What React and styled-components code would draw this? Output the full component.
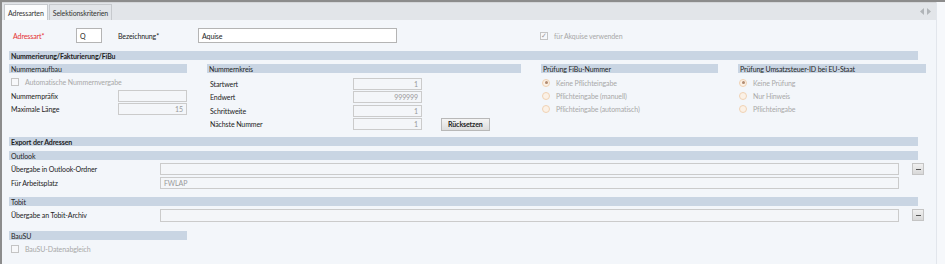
import React from "react"
import styled, { createGlobalStyle } from "styled-components"

const Global = createGlobalStyle`
  html, body {
    margin: 0;
    padding: 0;
    background: #f6f8fb;
  }
  * {
    box-sizing: border-box;
  }
`

const Frame = styled.div`
  width: 945px;
  height: 264px;
  display: flex;
  border-top: 2px solid #8c8c8c;
  border-left: 2px solid #8c8c8c;
  font-family: Lato, "Liberation Sans", sans-serif;
  font-size: 7px;
  letter-spacing: -0.1px;
  color: #222;
  overflow: hidden;
`

const Main = styled.div`
  width: 935px;
  display: flex;
  flex-direction: column;
  background: #f3f6fa;
  border-right: 1px solid #e2e6ec;
`

const TabBar = styled.div`
  height: 18px;
  display: flex;
  align-items: flex-end;
  padding-left: 2px;
  background: #e2e5e9;
  border-top: 1px solid #d4d6d9;
`

const Tab = styled.div`
  height: 16px;
  padding: 0 3px;
  display: flex;
  align-items: center;
  background: ${p => (p.$active ? "#fbfcfd" : "#e2e5e9")};
  border: 1px solid #c6c9cd;
  border-bottom: none;
  margin-right: 1px;
  color: #333;
`

const TabArrows = styled.div`
  margin-left: auto;
  align-self: center;
  display: flex;
  gap: 3px;
  padding-right: 5px;
`

const Content = styled.div`
  flex: 1;
  padding: 8px 9px 0 7px;
`

const Row = styled.div`
  display: flex;
  align-items: center;
  height: ${p => p.$h || 13}px;
  margin-top: ${p => p.$mt || 0}px;
`

const Label = styled.span`
  width: ${p => p.$w}px;
  padding-left: ${p => p.$pad || 2}px;
  color: ${p => (p.$red ? "#e53030" : p.$muted ? "#a8a8a8" : "#222")};
  white-space: nowrap;
`

const Input = styled.div`
  width: ${p => p.$w}px;
  height: ${p => p.$h || 12}px;
  border: 1px solid ${p => (p.$white ? "#b4b4b4" : "#cbcbcb")};
  background: ${p => (p.$white ? "#fff" : "#f4f6f9")};
  display: flex;
  align-items: center;
  justify-content: ${p => (p.$right ? "flex-end" : "flex-start")};
  padding: 0 3px;
  color: ${p => (p.$white ? "#222" : "#999")};
`

const Bar = styled.div`
  height: 9px;
  width: ${p => (p.$w ? `${p.$w}px` : "auto")};
  background: #c9d5e3;
  display: flex;
  align-items: center;
  padding-left: 2px;
  font-weight: ${p => (p.$bold ? 700 : 400)};
  color: #1e1e1e;
  margin-top: ${p => p.$mt || 0}px;
  margin-right: ${p => p.$mr || 0}px;
`

const Columns = styled.div`
  display: grid;
  grid-template-columns: 178px 314px 177px 188px;
  column-gap: 20px;
  margin-top: 4px;
  margin-right: 9px;
`

const Column = styled.div`
  display: flex;
  flex-direction: column;
`

const Spacer = styled.div`
  height: ${p => p.$h}px;
`

const Box = styled.span`
  width: 8px;
  height: 8px;
  border: 1px solid #c4c4c4;
  background: #f7f8fa;
  margin: 0 4px 0 2px;
  display: inline-flex;
  align-items: center;
  justify-content: center;
  color: #9a9a9a;
  font-size: 7px;
  line-height: 1;
`

const Radio = styled.span`
  width: 8px;
  height: 8px;
  border-radius: 50%;
  border: 1px solid #f0d2b4;
  background: #fbf1e6;
  margin: 0 4px 0 1px;
  display: inline-flex;
  align-items: center;
  justify-content: center;
  &::after {
    content: "";
    width: 3px;
    height: 3px;
    border-radius: 50%;
    background: ${p => (p.$on ? "#b08a70" : "transparent")};
  }
`

const Button = styled.div`
  height: 13px;
  padding: 0 6px;
  border: 1px solid #b8b8b8;
  background: linear-gradient(#f4f4f4, #dcdcdc);
  display: flex;
  align-items: center;
  font-weight: 700;
  color: #222;
  margin-left: ${p => p.$ml || 0}px;
`

const DotsButton = styled.div`
  width: 12px;
  height: 12px;
  border: 1px solid #c4c4c4;
  background: linear-gradient(#f0f0f0, #d8d8d8);
  margin-left: 13px;
  display: flex;
  align-items: center;
  justify-content: center;
  &::after {
    content: "";
    width: 5px;
    height: 1px;
    background: #555;
    margin-top: 1px;
  }
`

const Arrow = ({ dir }) => (
  <svg width="4" height="7" viewBox="0 0 4 7">
    <path d={dir === "l" ? "M4 0 L0 3.5 L4 7 Z" : "M0 0 L4 3.5 L0 7 Z"} fill="#b0b4b8" />
  </svg>
)

const NumRow = ({ label, value, children, h }) => (
  <Row $h={h}>
    <Label $w={146} $pad={3}>{label}</Label>
    <Input $w={69} $right>{value}</Input>
    {children}
  </Row>
)

const RadioRow = ({ on, children }) => (
  <Row>
    <Radio $on={on} />
    <Label $muted $pad={0}>{children}</Label>
  </Row>
)

export default function App() {
  return (
    <>
      <Global />
      <Frame>
        <Main>
          <TabBar>
            <Tab $active>Adressarten</Tab>
            <Tab>Selektionskriterien</Tab>
            <TabArrows>
              <Arrow dir="l" />
              <Arrow dir="r" />
            </TabArrows>
          </TabBar>
          <Content>
            <Row $h={15}>
              <Label $w={67} $pad={4} $red>Adressart*</Label>
              <Input $w={26} $h={15} $white>Q</Input>
              <Label $w={96} $pad={16}>Bezeichnung*</Label>
              <Input $w={199} $h={15} $white>Aquise</Input>
              <Label $w={155} $pad={141}>
                <Box>✓</Box>
              </Label>
              <Label $muted $pad={0}>für Akquise verwenden</Label>
            </Row>

            <Bar $bold $mt={8} $mr={9}>Nummerierung/Fakturierung/FiBu</Bar>

            <Columns>
              <Column>
                <Bar>Nummernaufbau</Bar>
                <Row $h={14} $mt={2}>
                  <Box />
                  <Label $muted $pad={0}>Automatische Nummernvergabe</Label>
                </Row>
                <Row>
                  <Label $w={109}>Nummernpräfix</Label>
                  <Input $w={69} />
                </Row>
                <Row>
                  <Label $w={109}>Maximale Länge</Label>
                  <Input $w={69} $right>15</Input>
                </Row>
              </Column>

              <Column>
                <Bar>Nummernkreis</Bar>
                <Spacer $h={4} />
                <NumRow label="Startwert" value="1" h={13} />
                <NumRow label="Endwert" value="999999" h={14} />
                <NumRow label="Schrittweite" value="1" h={13} />
                <NumRow label="Nächste Nummer" value="1" h={14}>
                  <Button $ml={19}>Rücksetzen</Button>
                </NumRow>
              </Column>

              <Column>
                <Bar>Prüfung FiBu-Nummer</Bar>
                <Spacer $h={3} />
                <RadioRow on>Keine Pflichteingabe</RadioRow>
                <RadioRow>Pflichteingabe (manuell)</RadioRow>
                <RadioRow>Pflichteingabe (automatisch)</RadioRow>
              </Column>

              <Column>
                <Bar>Prüfung Umsatzsteuer-ID bei EU-Staat</Bar>
                <Spacer $h={3} />
                <RadioRow on>Keine Prüfung</RadioRow>
                <RadioRow>Nur Hinweis</RadioRow>
                <RadioRow>Pflichteingabe</RadioRow>
              </Column>
            </Columns>

            <Bar $bold $mt={6} $mr={9}>Export der Adressen</Bar>
            <Bar $mt={5} $mr={9}>Outlook</Bar>
            <Row $h={14} $mt={2}>
              <Label $w={151}>Übergabe in Outlook-Ordner</Label>
              <Input $w={739} />
              <DotsButton />
            </Row>
            <Row $h={14}>
              <Label $w={151}>Für Arbeitsplatz</Label>
              <Input $w={739}>FWLAP</Input>
            </Row>
            <Bar $mt={7} $mr={9}>Tobit</Bar>
            <Row $h={14} $mt={2}>
              <Label $w={151}>Übergabe an Tobit-Archiv</Label>
              <Input $w={739} $h={13} />
              <DotsButton />
            </Row>
            <Bar $w={178} $mt={9}>BauSU</Bar>
            <Row $h={13} $mt={2}>
              <Box />
              <Label $muted $pad={0}>BauSU-Datenabgleich</Label>
            </Row>
          </Content>
        </Main>
      </Frame>
    </>
  )
}
